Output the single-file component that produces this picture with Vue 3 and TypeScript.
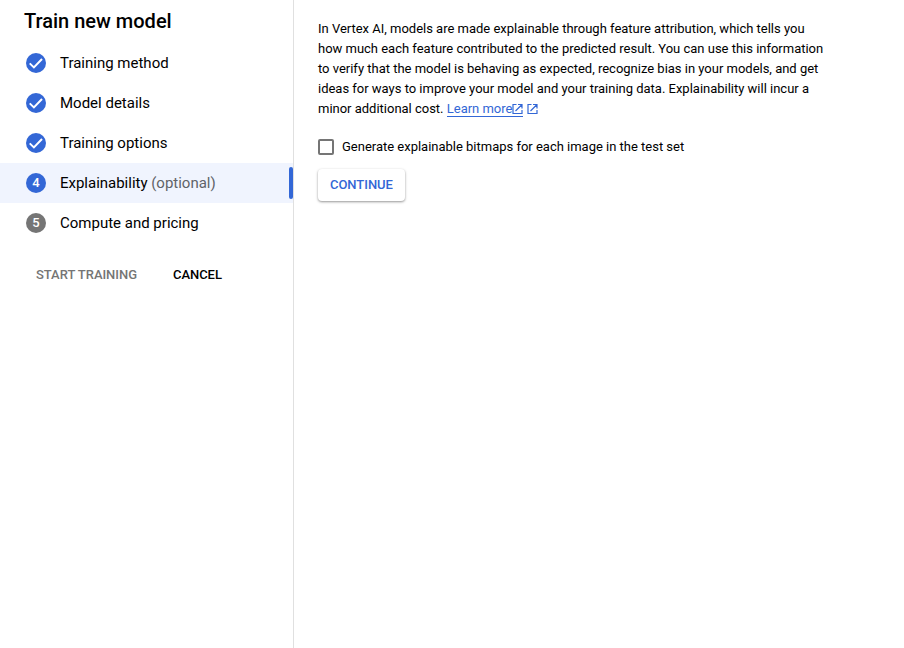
<script setup lang="ts">
interface Step {
  label: string
  optional?: boolean
  state: 'done' | 'active' | 'todo'
}

const steps: Step[] = [
  { label: 'Training method', state: 'done' },
  { label: 'Model details', state: 'done' },
  { label: 'Training options', state: 'done' },
  { label: 'Explainability', optional: true, state: 'active' },
  { label: 'Compute and pricing', state: 'todo' },
]
</script>

<template>
  <div class="page">
    <aside class="sidebar">
      <h1>Train new model</h1>
      <ol class="steps">
        <li v-for="(step, i) in steps" :key="step.label" class="step" :class="step.state">
          <span class="marker">
            <svg v-if="step.state === 'done'" width="20" height="20" viewBox="0 0 20 20">
              <path d="M3.7 10.4 L7.9 14.4 L16 6" fill="none" stroke="#fff" stroke-width="2" />
            </svg>
            <span v-else class="number">{{ i + 1 }}</span>
          </span>
          <span class="label">{{ step.label }}<span v-if="step.optional" class="optional"> (optional)</span></span>
        </li>
      </ol>
      <div class="actions">
        <button class="start" disabled>START TRAINING</button>
        <button class="cancel">CANCEL</button>
      </div>
    </aside>
    <main class="content">
      <p>
        In Vertex AI, models are made explainable through feature attribution, which tells you<br />
        how much each feature contributed to the predicted result. You can use this information<br />
        to verify that the model is behaving as expected, recognize bias in your models, and get<br />
        ideas for ways to improve your model and your training data. Explainability will incur a<br />
        minor additional cost. <a href="#">Learn more<svg class="ext" viewBox="0 0 11 12"><path d="M4.5 1.5H1V10.5H10V7M6 1.5H10V5.5M10 1.5L3.5 8" /></svg></a>
        <svg class="ext second" viewBox="0 0 11 12"><path d="M4.5 1.5H1V10.5H10V7M6 1.5H10V5.5M10 1.5L3.5 8" /></svg>
      </p>
      <label class="check">
        <input type="checkbox" />
        <span>Generate explainable bitmaps for each image in the test set</span>
      </label>
      <button class="continue">CONTINUE</button>
    </main>
  </div>
</template>

<style>
body {
  margin: 0;
  background: #fff;
}
</style>

<style scoped>
.page {
  display: flex;
  height: 648px;
  overflow: hidden;
  font-family: Roboto, "Liberation Sans", sans-serif;
  font-size: 13px;
  color: #000;
}
.sidebar {
  box-sizing: border-box;
  width: 294px;
  flex: none;
  border-right: 1px solid #e0e0e0;
}
h1 {
  margin: 0;
  padding: 9px 24px 10px;
  font-size: 20px;
  line-height: 24px;
  font-weight: 500;
}
.steps {
  list-style: none;
  margin: 0;
  padding: 0;
}
.step {
  display: flex;
  align-items: center;
  height: 40px;
  padding-left: 26px;
  font-size: 15px;
}
.marker {
  display: flex;
  align-items: center;
  justify-content: center;
  width: 20px;
  height: 20px;
  margin-right: 14px;
  border-radius: 50%;
  background: #3367d6;
  color: #fff;
  font-size: 13px;
  font-weight: 500;
}
.number {
  padding-bottom: 2px;
}
.active {
  background: #f0f4fe;
  letter-spacing: -0.01px;
}
.active::after {
  content: "";
  width: 4px;
  height: 32px;
  margin-left: auto;
  border-radius: 2px;
  background: #3367d6;
}
.todo .marker {
  background: #757575;
}
.optional {
  color: #5f6368;
}
button {
  border: 0;
  background: none;
  padding: 0 12px;
  height: 32px;
  font: 500 13px/32px Roboto, "Liberation Sans", sans-serif;
  letter-spacing: -0.04px;
  color: #000;
}
.actions {
  display: flex;
  gap: 12px;
  padding: 16px 24px;
}
.start {
  color: #757575;
}
.content {
  padding: 19px 24px;
  letter-spacing: -0.01px;
}
p {
  margin: 0;
  line-height: 20px;
  white-space: nowrap;
}
a {
  color: #3367d6;
  text-decoration: none;
  border-bottom: 1px solid #3367d6;
}
.ext {
  width: 11px;
  height: 12px;
  vertical-align: -2px;
  fill: none;
  stroke: #3367d6;
  stroke-width: 1.2;
}
a .ext {
  margin-left: -0.5px;
}
.second {
  margin-left: 4px;
}
.check {
  display: flex;
  align-items: center;
  gap: 8px;
  height: 20px;
  margin: 18px 0 12px;
}
.check span {
  padding-bottom: 2px;
}
input {
  appearance: none;
  box-sizing: border-box;
  width: 16px;
  height: 16px;
  margin: 0;
  border: 2px solid #757575;
  border-radius: 2px;
}
.continue {
  color: #3367d6;
  border-radius: 4px;
  background: #fff;
  box-shadow: 0 1px 3px rgba(0, 0, 0, 0.25), 0 1px 2px rgba(0, 0, 0, 0.2);
}
</style>
